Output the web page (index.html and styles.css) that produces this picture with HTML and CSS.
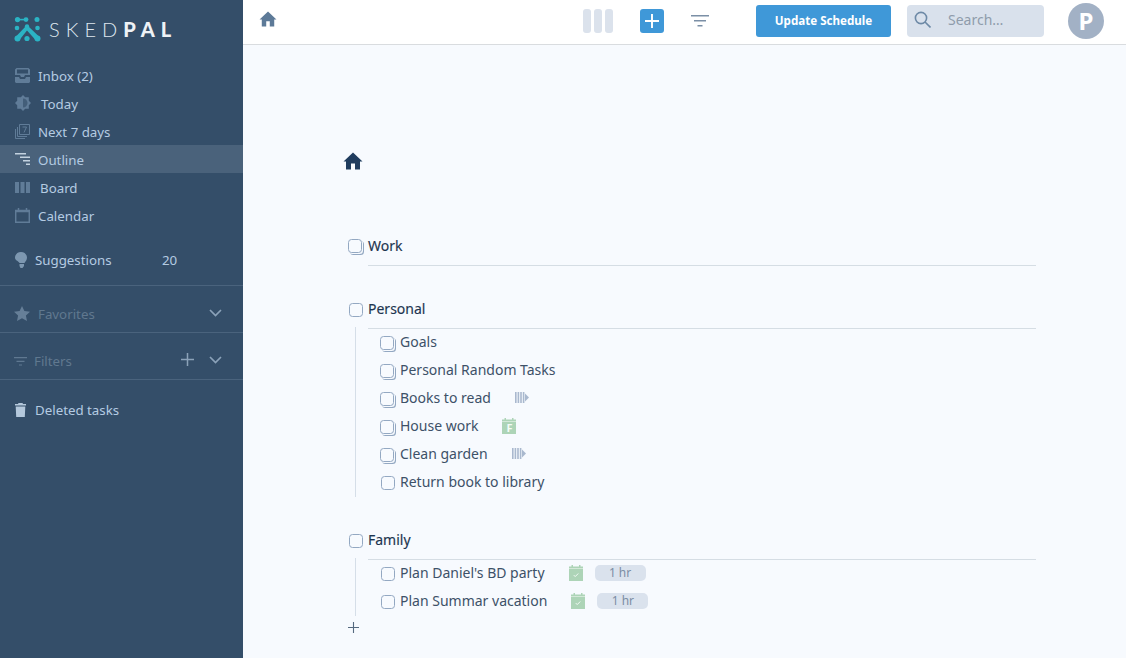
FILE: index.html
```html
<!DOCTYPE html>
<html lang="en">
<head>
<meta charset="utf-8">
<title>SkedPal</title>
<link rel="stylesheet" href="styles.css">
</head>
<body>
<svg class="defs" width="0" height="0">
  <symbol id="home" viewBox="0 0 20 18"><path d="M10 0.5 0.5 9.5H3V17.5H8V11.5H12V17.5H17V9.5H19.5Z"/></symbol>
  <symbol id="cal" viewBox="0 0 14 16"><path d="M0 1.5H2.5V0H4V1.5H10V0H11.5V1.5H14V16H0Z"/></symbol>
  <symbol id="bars" viewBox="0 0 14 11"><path d="M0 0H1.6V11H0ZM2.6 0H4.2V11H2.6ZM5.2 0H6.8V11H5.2ZM7.8 0H9.4V11H7.8ZM10 1.5 14 5.5 10 9.5Z"/></symbol>
  <symbol id="tick" viewBox="0 0 7 5"><path d="M.5 2.5 2.5 4.5 6.5 .5"/></symbol>
</svg>
<div class="app">
  <aside class="sidebar">
    <div class="logo">
      <svg class="logo-mark" viewBox="0 0 27 25" width="27" height="25">
        <g fill="#2bb3c4">
          <circle cx="3.5" cy="2.6" r="2.6"/><circle cx="12" cy="2.6" r="2.4"/><circle cx="23" cy="2.6" r="2.5"/><path d="M3.5 1.8H12V3.4H3.5Z"/>
          <circle cx="3" cy="11" r="2.3"/><circle cx="23.5" cy="11" r="2.3"/><circle cx="13" cy="9.5" r="2.2"/>
          <circle cx="3.5" cy="21.5" r="3"/><circle cx="13" cy="21.5" r="2.6"/><circle cx="23.5" cy="21.5" r="3"/>
          <path d="M1.5 20 12 9 14 9 25.5 20 22 23.5 13 13.5 5 23.5Z"/>
        </g>
      </svg>
      <span class="logo-text">SKED<b>PAL</b></span>
    </div>
    <nav class="nav">
      <a class="nav-row"><svg class="ni" viewBox="0 0 15 15"><path d="M0 1.5 1.5 0H13.5L15 1.5V7H10L9 9H6L5 7H0ZM2 1.5V5.5H13V1.5ZM0 9H4L5 11H10L11 9H15V14L14 15H1L0 14Z"/></svg><span class="nav-label">Inbox (2)</span></a>
      <a class="nav-row"><svg class="ni ni-wide" viewBox="0 0 16 16"><path d="M8 0 10.2 2.2H13.8V5.8L16 8 13.8 10.2V13.8H10.2L8 16 5.8 13.8H2.2V10.2L0 8 2.2 5.8V2.2H5.8Z"/><path class="sun-shade" d="M8 3.5C10.5 3.5 12.5 5.5 12.5 8S10.5 12.5 8 12.5Z"/></svg><span class="nav-label nudge">Today</span></a>
      <a class="nav-row"><svg class="ni line" viewBox="0 0 15 15"><path d="M4.5 .5H14.5V10.5H4.5Z"/><path d="M2.5 3V12.5H12M.5 5V14.5H10"/><path d="M7.5 3H11.5L9 8.5"/></svg><span class="nav-label next">Next 7 days</span></a>
      <a class="nav-row active"><svg class="ni" viewBox="0 0 15 13"><path class="bright" d="M0 0H11V1.5H0ZM5 3.5H15V5H5ZM8 7H15V8.5H8ZM11 10.5H15V12H11Z"/></svg><span class="nav-label">Outline</span></a>
      <a class="nav-row"><svg class="ni" viewBox="0 0 15 11"><path d="M0 0H4V11H0ZM5.5 0H9.5V11H5.5ZM11 0H15V11H11Z"/></svg><span class="nav-label nudge">Board</span></a>
      <a class="nav-row"><svg class="ni line thick" viewBox="0 0 15 15"><path d="M.7 2.5H14.3V14.3H.7Z"/><path d="M0 3.5H15M3.5 0V2.5M11.5 0V2.5"/></svg><span class="nav-label">Calendar</span></a>
    </nav>
    <div class="suggest">
      <svg class="si" viewBox="0 0 12 16"><path d="M6 0C9.5 0 12 2.5 12 5.7 12 8 10.4 9.4 9.5 11H4.5C4 9.5 0 8.2 0 5.7 0 2.5 2.5 0 6 0ZM4.5 12H9V14L7.5 16H5.5L4.5 14Z"/></svg>
      <span class="suggest-label">Suggestions</span><span class="suggest-count">20</span>
    </div>
    <div class="side-sec dim">
      <svg class="si star" viewBox="0 0 16 15"><path d="M8 0 10.4 5 16 5.7 11.9 9.5 13 15 8 12.3 3 15 4.1 9.5 0 5.7 5.6 5Z"/></svg>
      <span class="sec-label fav">Favorites</span>
      <svg class="chev" viewBox="0 0 13 8"><path d="M1 1 6.5 6.5 12 1"/></svg>
    </div>
    <div class="side-sec dim">
      <svg class="si filter" viewBox="0 0 13 9"><path d="M0 0H13V1.2H0ZM2.5 3.7H10.5V4.9H2.5ZM5 7.4H8V8.6H5Z"/></svg>
      <span class="sec-label">Filters</span>
      <svg class="plus-s" viewBox="0 0 13 13"><path d="M6.5 0V13M0 6.5H13"/></svg>
      <svg class="chev" viewBox="0 0 13 8"><path d="M1 1 6.5 6.5 12 1"/></svg>
    </div>
    <div class="deleted">
      <svg class="trash" viewBox="0 0 11 14"><path d="M3.5 0H7.5L8 1H11V2.4H0V1H3ZM.7 3.4H10.3L9.8 14H1.2Z"/></svg>
      <span class="suggest-label">Deleted tasks</span>
    </div>
  </aside>
  <div class="main">
    <header class="topbar">
      <svg class="top-home" viewBox="0 0 20 18"><use href="#home"/></svg>
      <div class="columns"><i></i><i></i><i></i></div>
      <button class="add-btn"><svg viewBox="0 0 13 13"><path d="M6.5 0V13M0 6.5H13"/></svg></button>
      <svg class="top-filter" viewBox="0 0 18 12"><path d="M0 0H18V1.4H0ZM3 5H15V6.4H3ZM6.5 10H11.5V11.4H6.5Z"/></svg>
      <button class="update">Update Schedule</button>
      <div class="search">
        <svg viewBox="0 0 17 17"><circle cx="7" cy="7" r="5.6"/><path d="M11 11 16.5 16.5"/></svg>
        <span>Search…</span>
      </div>
      <div class="avatar">P</div>
    </header>
    <main class="content">
      <svg class="crumb" viewBox="0 0 20 18"><use href="#home"/></svg>
      <section class="group">
        <div class="head"><span class="box stack head-stack"></span><span class="title">Work</span></div>
      </section>
      <section class="group">
        <div class="head"><span class="box"></span><span class="title">Personal</span></div>
        <div class="list">
          <div class="task"><span class="box stack"></span><span>Goals</span></div>
          <div class="task"><span class="box stack"></span><span>Personal Random Tasks</span></div>
          <div class="task"><span class="box stack"></span><span>Books to read</span><svg class="flow" viewBox="0 0 14 11"><use href="#bars"/></svg></div>
          <div class="task"><span class="box stack"></span><span>House work</span><span class="cal-tag"><svg viewBox="0 0 14 16"><use href="#cal"/></svg><em>F</em></span></div>
          <div class="task"><span class="box stack"></span><span>Clean garden</span><svg class="flow" viewBox="0 0 14 11"><use href="#bars"/></svg></div>
          <div class="task"><span class="box"></span><span>Return book to library</span></div>
        </div>
      </section>
      <section class="group">
        <div class="head"><span class="box"></span><span class="title">Family</span></div>
        <div class="list short">
          <div class="task"><span class="box"></span><span>Plan Daniel's BD party</span><span class="cal-tag"><svg viewBox="0 0 14 16"><use href="#cal"/></svg><svg class="tick" viewBox="0 0 7 5"><use href="#tick"/></svg></span><span class="dur">1 hr</span></div>
          <div class="task"><span class="box"></span><span>Plan Summar vacation</span><span class="cal-tag"><svg viewBox="0 0 14 16"><use href="#cal"/></svg><svg class="tick" viewBox="0 0 7 5"><use href="#tick"/></svg></span><span class="dur">1 hr</span></div>
        </div>
        <svg class="add-task" viewBox="0 0 12 12"><path d="M6 0V12M0 6H12"/></svg>
      </section>
    </main>
  </div>
</div>
</body>
</html>
```

FILE: styles.css
```css
* { box-sizing: border-box; }
html, body { margin: 0; height: 100%; overflow: hidden; }
body { font-family: "Noto Sans", "Open Sans", sans-serif; font-size: 14px; color: #34495f; background: #f7fafe; }
.defs { position: absolute; }
.app { display: flex; height: 658px; }

.sidebar { width: 243px; flex: none; background: #344e69; color: #b4cbe2; font-size: 13.3px; }
.logo { height: 61px; padding: 17px 0 0 14px; display: flex; align-items: flex-start; }
.logo-mark { flex: none; }
.logo-text { margin: 0 0 0 8px; font-family: "Lato", sans-serif; font-size: 20px; line-height: 24px; letter-spacing: 6px; font-weight: 300; color: #dfe7ef; }
.logo-text b { font-weight: 900; color: #eef2f6; }
.nav-row { height: 28px; display: flex; align-items: center; padding-left: 15px; }
.nav-row.active { background: #4a627b; }
.ni { width: 15px; height: 15px; flex: none; fill: #607c98; }
.ni.line { fill: none; stroke: #607c98; stroke-width: 1; }
.ni.line.thick { stroke-width: 1.5; }
.ni .bright { fill: #c3d2e0; }
.ni .sun-shade { fill: #344e69; opacity: .65; }
.ni-wide { width: 16px; height: 16px; }
.nav-label { margin: 2px 0 0 8px; }
.nav-label.nudge { margin-left: 10px; }
.suggest { height: 57px; display: flex; align-items: center; padding: 5px 0 0 15px; border-bottom: 1px solid #4a637d; }
.si { flex: none; fill: #7d97b0; }
.suggest .si { width: 12px; height: 16px; }
.suggest-label { margin-left: 8px; width: 127px; }
.side-sec { height: 47px; display: flex; align-items: center; padding: 10px 0 0 14px; border-bottom: 1px solid #4a637d; }
.side-sec .sec-label { color: #60788f; margin-left: 9px; flex: 1; }
.side-sec .sec-label.fav { margin-left: 8px; }
.star { width: 16px; height: 15px; fill: #667f98; margin-top: -2px; }
.filter { width: 13px; height: 9px; fill: #5f7891; margin-right: -2px; }
.chev { width: 13px; height: 8px; margin: -3px 21px 0 0; fill: none; stroke: #8ba2b9; stroke-width: 1.7; flex: none; }
.plus-s { width: 13px; height: 13px; margin: -3px 15px 0 0; fill: none; stroke: #8ba2b9; stroke-width: 1.5; flex: none; }
.deleted { height: 62px; display: flex; align-items: center; padding: 0 0 3px 15px; }
.trash { width: 11px; height: 14px; fill: #b4c8dc; flex: none; margin-right: 1px; }

.main { flex: 1; min-width: 0; display: flex; flex-direction: column; }
.topbar { height: 45px; flex: none; background: #fff; border-bottom: 1px solid #d9dcdf; display: flex; align-items: center; padding-left: 16px; }
.top-home { width: 18px; height: 16px; fill: #5d7a98; flex: none; margin-top: -6px; margin-right: 306px; }
.columns { display: flex; gap: 3px; margin-top: -2px; }
.columns i { width: 8px; height: 24px; border-radius: 3px; background: #dbe2ec; display: block; }
.add-btn { width: 24px; height: 24px; margin: -3px 0 0 27px; padding: 0; border: 0; border-radius: 3px; background: #3f98d8; display: flex; align-items: center; justify-content: center; }
.add-btn svg { width: 14px; height: 14px; fill: none; stroke: #fff; stroke-width: 1.8; }
.top-filter { width: 18px; height: 12px; margin: -3px 0 0 27px; fill: #7b8fa6; flex: none; }
.update { width: 135px; height: 32px; margin: -3px 0 0 47px; border: 0; border-radius: 3px; background: #3f98d8; color: #fff; font: 700 11.6px "Noto Sans", sans-serif; }
.search { width: 137px; height: 32px; margin: -3px 0 0 16px; border-radius: 4px; background: #d9e1ec; display: flex; align-items: center; padding-left: 7px; color: #8f9cab; font-size: 14px; }
.search svg { width: 17px; height: 17px; margin-top: -3px; margin-right: 17px; fill: none; stroke: #6d89a6; stroke-width: 1.6; }
.search span { margin-top: -2px; }
.avatar { width: 36px; height: 36px; margin: -3px 0 0 24px; border-radius: 50%; background: #a2b1c5; color: #fff; font-weight: 700; font-size: 24px; line-height: 36px; text-align: center; }

.content { flex: 1; padding: 107px 90px 0 101px; }
.crumb { display: block; width: 20px; height: 18px; margin-left: -1px; fill: #1f3c5e; margin-bottom: 54px; }
.group { margin-bottom: 21px; }
.head { height: 42px; display: flex; align-items: center; padding-top: 1px; border-bottom: 1px solid #d5dde4; margin-left: 24px; position: relative; }
.head .box { position: absolute; left: -19px; top: 16px; }
.head .box.head-stack { left: -19px; top: 15px; }
.title { color: #1d3550; font-size: 14px; -webkit-text-stroke: 0.15px #1d3550; }
.box { width: 14px; height: 14px; flex: none; border: 1px solid #93a8c2; border-radius: 3.5px; background: #f7fafe; display: block; }
.box.stack { box-shadow: 1px 1px 0 #f7fafe, 2px 2px 0 #93a8c2; margin-left: -1px; margin-right: 1px; }
.list { margin: 0 0 1px 11px; border-left: 1px solid #d5dee8; padding-left: 25px; height: 170px; }
.list.short { height: 58px; }
.task { height: 28px; display: flex; align-items: center; color: #3d5168; }
.task:first-child { margin-top: -2px; }
.task .box { margin-right: 5px; margin-top: 4px; }
.task .box.stack { margin-right: 6px; }
.flow { width: 14px; height: 11px; fill: #a9b8ce; margin-left: 24px; }
.cal-tag { position: relative; width: 14px; height: 16px; margin: 2px 0 0 24px; display: block; }
.cal-tag svg { width: 14px; height: 16px; fill: #add4b7; display: block; }
.cal-tag::after { content: ""; position: absolute; left: 0; right: 0; top: 3px; height: 1px; background: #d3e8d8; }
.cal-tag em { position: absolute; inset: 3px 0 0; text-align: center; color: #f4fbf6; font: 700 11px/14px "Noto Sans", sans-serif; }
.cal-tag .tick { position: absolute; left: 4px; top: 8px; width: 6px; height: 4px; fill: none; stroke: #f4fbf6; stroke-width: 1.2; }
.dur { width: 51px; height: 16px; margin: 1px 0 0 12px; border-radius: 5px; background: #dae2ed; color: #7b8da4; font-size: 12px; line-height: 16px; text-align: center; }
.add-task { display: block; width: 11px; height: 11px; margin: 6px 0 0 4px; fill: none; stroke: #55697f; stroke-width: 1.2; }
```
